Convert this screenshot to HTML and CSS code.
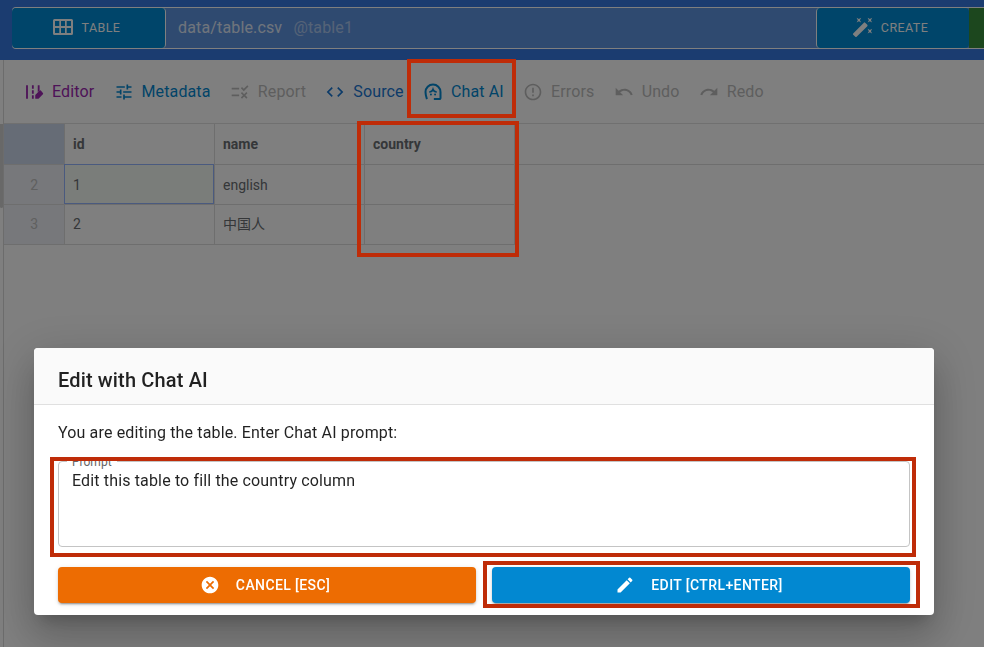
FILE: index.html
```html
<!DOCTYPE html>
<html lang="en">
<head>
    <meta charset="UTF-8">
    <meta name="viewport" content="width=device-width, initial-scale=1.0">
    <link rel="stylesheet" href="styles.css">
    <title>Edit with Chat AI</title>
</head>
<body>
    <header class="topbar">
        <div class="path-bar">
            <button class="path-button path-table">
                <svg class="icon-table" viewBox="0 0 20 16"><path fill="currentColor" fill-rule="evenodd" d="M1.500 0h17A1.500 1.500 0 0 1 20 1.500v13a1.500 1.500 0 0 1-1.500 1.500h-17A1.500 1.500 0 0 1 0 14.500v-13A1.500 1.500 0 0 1 1.500 0zM2 2v5h4.300V2zm6 0v5h4V2zm5.700 0v5H18V2zM2 9v5h4.300V9zm6 0v5h4V9zm5.700 0v5H18V9z"/></svg>
                TABLE
            </button>
            <div class="path-text">data/table.csv <span class="path-name">@table1</span></div>
            <button class="path-button path-create">
                <svg class="icon-wand" viewBox="0 0 24 24"><path fill="currentColor" d="M7.500 5.600 10 7 8.600 4.500 10 2 7.500 3.400 5 2l1.400 2.500L5 7zm12 9.800L17 14l1.400 2.500L17 19l2.500-1.400L22 19l-1.400-2.500L22 14zM22 2l-2.500 1.400L17 2l1.400 2.500L17 7l2.500-1.400L22 7l-1.400-2.500zm-7.630 5.290a.9959.9959 0 0 0-1.410 0L1.290 18.960c-.39.39-.39 1.020 0 1.410l2.340 2.340c.39.39 1.020.39 1.410 0L16.700 11.050c.39-.39.39-1.020 0-1.410l-2.330-2.350z"/></svg>
                CREATE
            </button>
            <div class="path-green"></div>
        </div>
    </header>

    <div class="workspace">
        <div class="sidebar"><div class="sidebar-thumb"></div></div>
        <main class="content">
            <nav class="toolbar">
                <span class="tool tool-editor">
                    <svg viewBox="0 0 24 24"><path d="M2.500 4h2.200v16H2.500zm7 0h2.200v4H9.500zm0 6h2.200v4H9.500zm0 6h2.200v4H9.500zm7-12h2.200v6l-2.200 2.200zm3.700 6.300a1 1 0 0 0-1.410 0L13.500 15.600V20h3.900l5.300-5.300a1 1 0 0 0 0-1.410z"/></svg>
                    Editor
                </span>
                <span class="tool tool-info">
                    <svg viewBox="0 0 24 24"><path d="M3 17v2h6v-2H3zM3 5v2h10V5H3zm10 16v-2h8v-2h-8v-2h-2v6h2zM7 9v2H3v2h4v2h2V9H7zm14 4v-2H11v2h10zm-6-4h2V7h4V5h-4V3h-2v6z"/></svg>
                    Metadata
                </span>
                <span class="tool tool-off">
                    <svg viewBox="0 0 24 24"><path d="M16.540 11 13 7.460l1.410-1.410 2.120 2.120 4.240-4.240 1.410 1.410L16.540 11zM11 7H2v2h9V7zm10 6.410L19.590 12 17 14.590 14.410 12 13 13.410 15.590 16 13 18.590 14.410 20 17 17.410 19.590 20 21 18.590 18.410 16 21 13.410zM11 15H2v2h9v-2z"/></svg>
                    Report
                </span>
                <span class="tool tool-primary">
                    <svg viewBox="0 0 24 24"><path d="M9.400 16.600 4.800 12l4.600-4.600L8 6l-6 6 6 6 1.400-1.400zm5.200 0 4.600-4.600-4.600-4.600L16 6l6 6-6 6-1.400-1.400z"/></svg>
                    Source
                </span>
                <span class="tool tool-info">
                    <svg viewBox="0 0 24 24"><path class="chat-line" d="M4.700 20.500C3.700 17.700 3 14.600 3 12a9 9 0 0 1 18 0v7.300a1.200 1.200 0 0 1-1.200 1.200H13"/><path class="chat-hair" d="M7.500 12C10 12 11.500 10.500 12 8.800 12.500 10.500 14 12 16.500 12"/><circle cx="9.500" cy="15" r="1.200"/><circle cx="14.500" cy="15" r="1.200"/></svg>
                    Chat AI
                </span>
                <span class="tool tool-off">
                    <svg viewBox="0 0 24 24"><path d="M11 15h2v2h-2zm0-8h2v6h-2zm.990-5C6.470 2 2 6.480 2 12s4.470 10 9.990 10C17.520 22 22 17.520 22 12S17.520 2 11.990 2zM12 20c-4.420 0-8-3.580-8-8s3.580-8 8-8 8 3.580 8 8-3.580 8-8 8z"/></svg>
                    Errors
                </span>
                <span class="tool tool-off">
                    <svg viewBox="0 0 24 24"><path d="M12.500 8c-2.650 0-5.050.99-6.900 2.600L2 7v9h9l-3.620-3.620c1.390-1.160 3.160-1.880 5.120-1.880 3.540 0 6.550 2.310 7.600 5.500l2.370-.78C21.080 11.030 17.150 8 12.500 8z"/></svg>
                    Undo
                </span>
                <span class="tool tool-off">
                    <svg viewBox="0 0 24 24"><path d="M18.400 10.600C16.550 8.990 14.150 8 11.500 8c-4.650 0-8.580 3.030-9.960 7.220L3.900 16c1.050-3.190 4.050-5.500 7.600-5.500 1.950 0 3.730.72 5.120 1.880L13 16h9V7l-3.600 3.600z"/></svg>
                    Redo
                </span>
            </nav>

            <table class="grid">
                <thead>
                    <tr>
                        <th class="num-head"></th>
                        <th>id</th>
                        <th>name</th>
                        <th>country</th>
                        <th class="fill"></th>
                    </tr>
                </thead>
                <tbody>
                    <tr>
                        <td class="num">2</td>
                        <td class="selected">1</td>
                        <td>english</td>
                        <td></td>
                    </tr>
                    <tr>
                        <td class="num">3</td>
                        <td>2</td>
                        <td class="cjk">中国人</td>
                        <td></td>
                    </tr>
                </tbody>
            </table>
        </main>
    </div>

    <div class="backdrop">
        <section class="dialog">
            <h2 class="dialog-title">Edit with Chat AI</h2>
            <div class="dialog-body">
                <p class="dialog-text">You are editing the table. Enter Chat AI prompt:</p>
                <div class="prompt">
                    <label class="prompt-label" for="prompt">Prompt</label>
                    <textarea id="prompt" class="prompt-input">Edit this table to fill the country column</textarea>
                </div>
                <div class="actions">
                    <button class="action action-cancel">
                        <svg viewBox="0 0 24 24"><path d="M12 2C6.470 2 2 6.470 2 12s4.470 10 10 10 10-4.470 10-10S17.530 2 12 2zm5 13.590L15.590 17 12 13.410 8.410 17 7 15.590 10.590 12 7 8.410 8.410 7 12 10.590 15.590 7 17 8.410 13.410 12 17 15.590z"/></svg>
                        Cancel [Esc]
                    </button>
                    <button class="action action-edit">
                        <svg viewBox="0 0 24 24"><path d="M3 17.250V21h3.750L17.810 9.940l-3.750-3.750L3 17.250zM20.710 7.040c.39-.39.39-1.020 0-1.410l-2.340-2.340a.9959.9959 0 0 0-1.410 0l-1.830 1.830 3.750 3.750 1.830-1.830z"/></svg>
                        Edit [Ctrl+Enter]
                    </button>
                </div>
            </div>
        </section>
    </div>

    <!-- Red annotation boxes drawn on top of the screenshot -->
    <div class="mark mark-chat"></div>
    <div class="mark mark-country"></div>
    <div class="mark mark-prompt"></div>
    <div class="mark mark-edit"></div>
</body>
</html>
```

FILE: styles.css
```css
html, body {
    height: 100%;
}

body {
    margin: 0;
    overflow: hidden;
    background: #ffffff;
    font-family: Roboto, "Noto Sans CJK SC", sans-serif;
    font-size: 16px;
}

/* Top bar */
.topbar {
    height: 60px;
    box-sizing: border-box;
    padding: 7px 0 0 12px;
    background: #3678e0;
}

.path-bar {
    display: flex;
    height: 42px;
    box-sizing: border-box;
    border: 1px solid #ffffff;
    border-right: none;
    border-radius: 4px 0 0 4px;
    background: #5e94e0;
}

.path-button {
    display: flex;
    align-items: center;
    justify-content: center;
    gap: 9px;
    width: 154px;
    padding: 0 4px 2px 0;
    border: none;
    border-radius: 4px;
    background: #008ad4;
    color: #ffffff;
    font-family: inherit;
    font-size: 12.500px;
    letter-spacing: 0.4px;
}

.path-table {
    margin-left: -1px;
    border-right: 1px solid #ffffff;
}

.path-create {
    width: 153px;
    gap: 7px;
    padding-right: 6px;
    border-left: 1px solid #ffffff;
}

.icon-table {
    width: 20px;
    height: 16px;
}

.icon-wand {
    width: 22px;
    height: 22px;
}

.path-text {
    flex: 1;
    padding-left: 12px;
    line-height: 39px;
    color: #ffffff;
    font-size: 16px;
    letter-spacing: 0.15px;
    opacity: 0.8;
}

.path-name {
    margin-left: 7px;
    opacity: 0.6;
}

.path-green {
    width: 15px;
    background: #388e3c;
}

/* Workspace */
.workspace {
    display: flex;
    height: 587px;
}

.sidebar {
    width: 3px;
    flex: none;
    padding-top: 64px;
}

.sidebar-thumb {
    height: 84px;
    border-radius: 0 0 2px 2px;
    background: #d0d0d0;
}

.content {
    flex: 1;
    border-left: 1px solid #d8d8d8;
}

.toolbar {
    display: flex;
    align-items: center;
    gap: 19.300px;
    height: 64px;
    box-sizing: border-box;
    padding: 0 0 0 20px;
    border-bottom: 1px solid #e0e0e0;
    letter-spacing: 0.12px;
}

.tool {
    display: flex;
    align-items: center;
    gap: 8px;
    fill: currentColor;
}

.tool svg {
    width: 20px;
    height: 20px;
}

.chat-line, .chat-hair {
    fill: none;
    stroke: currentColor;
}

.chat-line {
    stroke-width: 2.400;
}

.chat-hair {
    stroke-width: 1.800;
}

.tool-editor {
    color: #9c27b0;
}

.tool-info {
    color: #0288d1;
}

.tool-primary {
    color: #1976d2;
}

.tool-off {
    color: #bdbdbd;
}

/* Table */
.grid {
    width: 100%;
    border-collapse: collapse;
    table-layout: fixed;
    font-size: 14px;
    color: #6a6e72;
}

.grid th, .grid td {
    width: 150px;
    box-sizing: border-box;
    padding: 0 0 0 8.500px;
    border: 1px solid #dcdcdc;
    text-align: left;
}

.grid tr {
    height: 40px;
}

.grid thead th, .grid tbody tr:first-child td {
    padding-top: 1px;
}

.grid thead th {
    border-top: none;
    font-weight: 700;
    font-size: 14px;
}

.grid .num-head {
    width: 60px;
    border-left: none;
    background: #ccd8ec;
}

.grid .num {
    border-left: none;
    padding-left: 1px;
    text-align: center;
    background: #eef1f6;
    color: #c0c0c0;
}

.grid .fill {
    width: auto;
    border-right: none;
}

.grid .cjk {
    padding-bottom: 2px;
}

.grid .selected {
    outline: 1px solid #94b4ff;
    outline-offset: -1px;
    background: #f4faf4;
}

/* Dialog */
.backdrop {
    position: fixed;
    inset: 0;
    display: flex;
    align-items: flex-start;
    box-sizing: border-box;
    padding: 348px 50px 0 34px;
    background: rgba(0, 0, 0, 0.5);
}

.dialog {
    flex: 1;
    border-radius: 4px;
    overflow: hidden;
    background: #ffffff;
    box-shadow: 0 11px 15px -7px rgba(0, 0, 0, 0.2),
                0 24px 38px 3px rgba(0, 0, 0, 0.14),
                0 9px 46px 8px rgba(0, 0, 0, 0.12);
}

.dialog-title {
    margin: 0;
    height: 57px;
    box-sizing: border-box;
    padding: 0 24px;
    border-bottom: 1px solid #e0e0e0;
    background: #fafafa;
    color: rgba(0, 0, 0, 0.87);
    font-size: 20px;
    font-weight: 500;
    letter-spacing: 0.15px;
    line-height: 64px;
}

.dialog-body {
    padding: 0 24px 12px;
}

.dialog-text {
    margin: 0;
    padding-top: 18px;
    height: 38px;
    box-sizing: content-box;
    line-height: 20px;
    letter-spacing: 0.15px;
    color: rgba(0, 0, 0, 0.87);
}

.prompt {
    position: relative;
    height: 86px;
    box-sizing: border-box;
    border: 1px solid #c4c4c4;
    border-radius: 4px;
}

.prompt-label {
    position: absolute;
    top: -7px;
    left: 8px;
    padding: 0 5px;
    background: #ffffff;
    color: #666666;
    font-size: 12px;
    line-height: 14px;
}

.prompt-input {
    display: block;
    width: 100%;
    height: 100%;
    box-sizing: border-box;
    padding: 9px 13px;
    border: none;
    outline: none;
    resize: none;
    background: transparent;
    color: rgba(0, 0, 0, 0.87);
    font-family: inherit;
    font-size: 16px;
    letter-spacing: 0.15px;
    line-height: 20px;
}

.actions {
    display: flex;
    gap: 16px;
    margin-top: 20px;
}

.action {
    flex: 1;
    display: flex;
    align-items: center;
    justify-content: center;
    gap: 16px;
    height: 36px;
    padding: 0 4px 0 0;
    border: none;
    border-radius: 4px;
    color: #ffffff;
    font-family: inherit;
    font-size: 14px;
    font-weight: 500;
    letter-spacing: 0.4px;
    text-transform: uppercase;
    box-shadow: 0 3px 1px -2px rgba(0, 0, 0, 0.2),
                0 2px 2px 0 rgba(0, 0, 0, 0.14),
                0 1px 5px 0 rgba(0, 0, 0, 0.12);
}

.action svg {
    width: 20px;
    height: 20px;
    fill: currentColor;
}

.action-cancel {
    background: #ed6c02;
}

.action-edit {
    background: #0288d1;
}

/* Annotations */
.mark {
    position: fixed;
    box-sizing: border-box;
    border: 4px solid #bf2c08;
}

.mark-chat {
    left: 407px;
    top: 59px;
    width: 109px;
    height: 59px;
}

.mark-country {
    left: 357px;
    top: 121px;
    width: 162px;
    height: 136px;
}

.mark-prompt {
    left: 50px;
    top: 457px;
    width: 866px;
    height: 100px;
}

.mark-edit {
    left: 483px;
    top: 561px;
    width: 437px;
    height: 47px;
}
```
